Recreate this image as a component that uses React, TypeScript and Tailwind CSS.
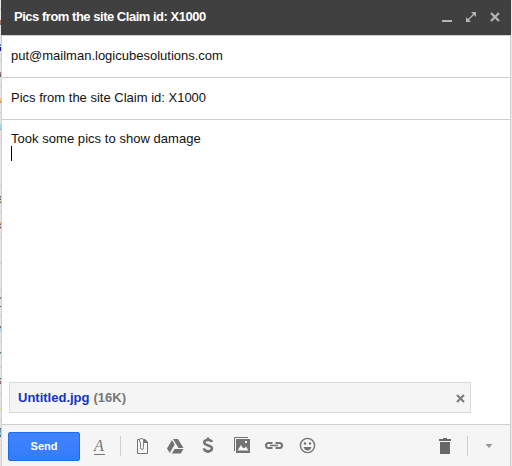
import React from "react";

// Slivers of the inbox list that show at the left of the compose window: [top, height, colour]
const slivers: [number, number, string][] = [
  [8, 1, "#cccccc"], [20, 3, "#a87b6b"], [23, 2, "#777777"], [34, 1, "#cccccc"], [44, 2, "#5b8bc8"], [47, 4, "#1b1b8a"],
  [60, 1, "#cccccc"], [72, 2, "#a87b6b"], [74, 3, "#666666"], [86, 1, "#cccccc"], [98, 3, "#e8c88a"], [101, 2, "#c98b4a"],
  [112, 1, "#cccccc"], [124, 5, "#9bd8ea"], [129, 1, "#6fa3b5"], [138, 1, "#cccccc"], [185, 1, "#cccccc"],
  [196, 1, "#666666"], [197, 2, "#b8a98a"], [199, 1, "#666666"], [201, 1, "#d4a05a"], [202, 1, "#666666"], [211, 1, "#cccccc"],
  [222, 2, "#d8a27a"], [224, 1, "#8a5a5a"], [226, 1, "#c9a09a"], [227, 1, "#666666"], [228, 1, "#d8a27a"], [237, 1, "#cccccc"],
  [263, 1, "#cccccc"], [289, 1, "#cccccc"], [297, 2, "#8c8478"], [306, 1, "#555555"], [315, 1, "#cccccc"],
  [326, 2, "#666f80"], [328, 4, "#a5d9e8"], [341, 1, "#cccccc"], [352, 1, "#666666"], [353, 1, "#79c3dd"], [367, 1, "#cccccc"],
  [378, 1, "#666666"], [379, 1, "#9bc3dd"], [381, 2, "#b86a5a"], [383, 1, "#5b6b8a"], [393, 1, "#cccccc"],
  [407, 3, "#ead9a5"], [419, 1, "#cccccc"], [428, 1, "#555555"], [429, 3, "#5b9fc8"], [432, 3, "#8bc3dd"], [435, 2, "#4b6f8a"], [445, 1, "#cccccc"],
];

function WindowControls() {
  return (
    <svg width="60" height="14" viewBox="440 10 60 14" className="shrink-0" fill="#b5b5b5">
      <rect x="442" y="20" width="10" height="2" />
      <path d="M471 12h5v5zM466 17v5h5z" />
      <path d="M468 20l6-6" stroke="#b5b5b5" strokeWidth="1.3" />
      <path d="M491 13l8 8M499 13l-8 8" stroke="#b5b5b5" strokeWidth="2.2" />
    </svg>
  );
}

function FormatIcon() {
  return (
    <div className="ml-[14px] h-[18px] w-[11px] shrink-0 border-b border-[#777] text-center font-['Liberation_Serif',serif] text-[16px] leading-[17px] text-[#777] italic">
      <span className="-ml-px">A</span>
    </div>
  );
}

function InsertIcons() {
  return (
    <svg width="184" height="24" viewBox="134 434 184 24" className="ml-[13px] shrink-0" fill="#737373">
      {/* Attachment */}
      <path d="M139.5 439.5h-2v14h10v-11l-3-3h-1" fill="none" stroke="#737373" />
      <path d="M144 439h1l3 3v1h-4z" />
      <path d="M139.5 442v-2q0-1.500 1.500-1.500h1q1.500 0 1.500 1.500v7.500q0 2-1.500 2t-1.500-2V442" fill="none" stroke="#737373" strokeWidth=".9" />
      {/* Drive */}
      <path d="M173 439h5l5.500 9h-5zM172 440l2.700 4.500-5 8.500-2.700-4.500zM174.600 449H183.400l-2.600 4.500h-9z" />
      {/* Money */}
      <path d="M212 441.900c-.5-1.300-2-2-4-2-2.300 0-3.800 1-3.800 2.700 0 3.700 7.800 2 7.800 5.700 0 1.900-1.700 2.900-4 2.900s-3.900-1.100-4.100-2.900M208 437.500v2.500M208 451v2" fill="none" stroke="#737373" strokeWidth="2.500" />
      {/* Photos */}
      <path d="M234.500 451v-13.500H248" fill="none" stroke="#737373" />
      <path fillRule="evenodd" d="M236 439h14v14h-14zM237.500 450.500h11l-2.500-4-1.300 1.500-1.700 0-2-3zM245 441v2h2v-2z" />
      {/* Link */}
      <path d="M272.500 443H268.500a2.500 2.500 0 0 0 0 5H272.500M275.500 443H279.500a2.500 2.500 0 0 1 0 5H275.500" fill="none" stroke="#737373" strokeWidth="2" />
      <path d="M270 445.500h8" fill="none" stroke="#737373" strokeWidth="1.500" />
      {/* Emoji */}
      <circle cx="307.500" cy="445.500" r="7.100" fill="none" stroke="#737373" strokeWidth="1.400" />
      <circle cx="305" cy="443.500" r="1.200" />
      <circle cx="310" cy="443.500" r="1.200" />
      <path d="M303.500 447h8q-1.300 3.500-4 3.500t-4-3.500z" />
    </svg>
  );
}

export default function App() {
  return (
    <div className="flex h-[466px] w-[512px] overflow-hidden bg-white font-['Liberation_Sans',Arial,sans-serif] text-[13px] text-[#222]">
      <div className="relative w-px shrink-0 bg-[#e6e6e6]">
        {slivers.map(([top, height, background]) => (
          <div key={top} className="absolute left-0 w-px" style={{ top, height, background }} />
        ))}
      </div>
      <div className="flex w-[510px] shrink-0 flex-col">
        <header className="flex h-[35px] shrink-0 items-start justify-between bg-[#404040] pl-[13px] text-white">
          <h1 className="pt-[9px] text-[13px] leading-[16px] font-bold tracking-[-0.48px] whitespace-nowrap">Pics from the site Claim id: X1000</h1>
          <div className="mr-[11px] pt-[10px]"><WindowControls /></div>
        </header>
        <main className="flex min-h-0 flex-1 flex-col border-t border-r border-l border-[#cfcfcf] bg-white text-[#111]">
          <div className="h-[42px] shrink-0 border-b border-[#cfcfcf] pt-[12px] pl-[9px] leading-[16px]">put@mailman.logicubesolutions.com</div>
          <div className="h-[42px] shrink-0 border-b border-[#cfcfcf] pt-[12px] pl-[9px] leading-[16px]">Pics from the site Claim id: X1000</div>
          <div className="flex-1 pt-[11px] pl-[9px] leading-[16px]">
            <p className="tracking-[0.04px]">Took some pics to show damage</p>
            <div className="-mt-px h-[15px] w-px bg-black" />
          </div>
          <div className="mb-[11px] ml-[7px] flex h-[31px] w-[462px] shrink-0 items-center border border-[#d9d9d9] bg-[#f5f5f5] pl-[8px] font-bold">
            <span className="text-[#1133cc]">Untitled.jpg</span>
            <span className="ml-[4px] text-[#777]">(16K)</span>
            <svg width="9" height="9" viewBox="0 0 9 9" className="mt-[2px] mr-[5px] ml-auto" stroke="#7c7c7c" strokeWidth="2.1">
              <path d="M1 1l7 7M8 1l-7 7" />
            </svg>
          </div>
          <footer className="flex h-[42px] shrink-0 items-center border-t border-[#cfcfcf] bg-[#f5f5f5] pl-[6px]">
            <button className="mt-[2px] h-[29px] w-[72px] shrink-0 rounded-[2px] border border-[#1a6cf5] bg-gradient-to-b from-[#4083fc] to-[#357bfa] text-[11px] font-bold text-white">Send</button>
            <FormatIcon />
            <div className="ml-[15px] h-[20px] w-px shrink-0 bg-[#cfcfcf]" />
            <InsertIcons />
            <svg width="14" height="17" viewBox="438 437 14 17" className="ml-[120px] shrink-0" fill="#686868">
              <path d="M439 440v-1h4v-1h4v1h4v2h-12zM440 442h10v12h-10z" />
            </svg>
            <div className="ml-[15px] h-[20px] w-px shrink-0 bg-[#cfcfcf]" />
            <svg width="8" height="5" viewBox="0 0 8 5" className="mt-[2px] ml-[17px] shrink-0" fill="#999">
              <path d="M0.500 0h7L4 4z" />
            </svg>
          </footer>
        </main>
      </div>
      <div className="w-px bg-[#e9e9e9]" />
    </div>
  );
}
